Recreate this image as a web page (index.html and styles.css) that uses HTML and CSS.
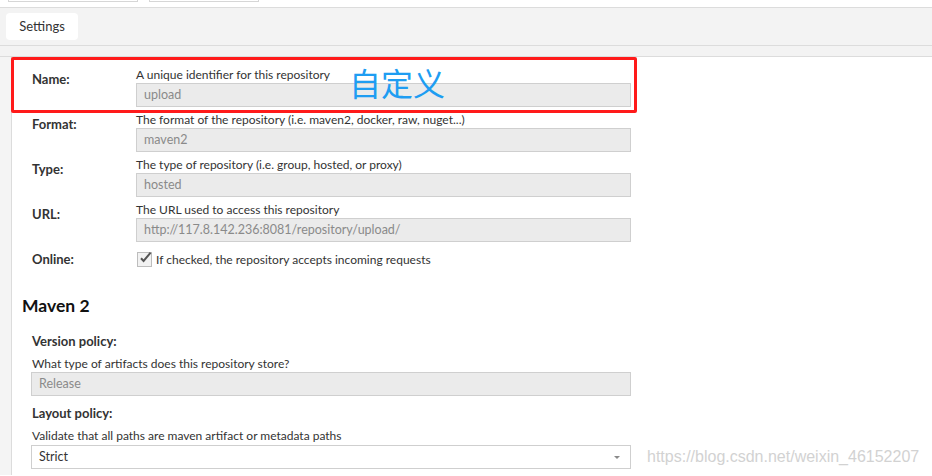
FILE: index.html
```html
<!DOCTYPE html>
<html>
<head>
<meta charset="utf-8">
<link rel="stylesheet" href="styles.css">
</head>
<body>
<div class="topstrip">
  <div class="stub stub-a"></div>
  <div class="stub stub-b"></div>
</div>
<div class="tabbar">
  <div class="tab">Settings</div>
</div>
<div class="subbar"></div>
<div class="main">
  <div class="gutter"></div>
  <div class="content">
    <div class="row">
      <div class="row-label">Name:</div>
      <div class="field">
        <div class="help">A unique identifier for this repository</div>
        <div class="input">upload</div>
      </div>
    </div>
    <div class="row">
      <div class="row-label">Format:</div>
      <div class="field">
        <div class="help">The format of the repository (i.e. maven2, docker, raw, nuget...)</div>
        <div class="input">maven2</div>
      </div>
    </div>
    <div class="row">
      <div class="row-label">Type:</div>
      <div class="field">
        <div class="help">The type of repository (i.e. group, hosted, or proxy)</div>
        <div class="input">hosted</div>
      </div>
    </div>
    <div class="row">
      <div class="row-label">URL:</div>
      <div class="field">
        <div class="help">The URL used to access this repository</div>
        <div class="input">http://117.8.142.236:8081/repository/upload/</div>
      </div>
    </div>
    <div class="row">
      <div class="row-label">Online:</div>
      <div class="field check-field">
        <span class="checkbox"><svg width="14" height="14" viewBox="0 0 14 14"><path d="M3 7.2 L5.6 10 L12.6 1.6" fill="none" stroke="#555" stroke-width="2"/></svg></span>
        <span class="check-text">If checked, the repository accepts incoming requests</span>
      </div>
    </div>

    <h2 class="section-title">Maven 2</h2>

    <div class="block">
      <div class="block-label">Version policy:</div>
      <div class="block-help">What type of artifacts does this repository store?</div>
      <div class="input wide">Release</div>
    </div>
    <div class="block">
      <div class="block-label">Layout policy:</div>
      <div class="block-help">Validate that all paths are maven artifact or metadata paths</div>
      <div class="select wide">Strict<span class="arrow"></span></div>
    </div>
  </div>
</div>

<div class="annot-box"></div>
<div class="annot-text">自定义</div>
<div class="watermark">https://blog.csdn.net/weixin_46152207</div>
</body>
</html>
```

FILE: styles.css
```css
html, body {
  margin: 0;
  padding: 0;
  background: #fff;
  font-family: "Lato", "Open Sans", sans-serif;
  color: #333;
  width: 932px;
  height: 476px;
  overflow: hidden;
  position: relative;
}

.topstrip {
  height: 7px;
  background: #fff;
  border-bottom: 1px solid #dcdcdc;
  display: flex;
  gap: 11px;
  padding-left: 8px;
}
.stub {
  height: 1px;
  border: 1px solid #d6d6d6;
  border-top: none;
  background: #fff;
}
.stub-a { width: 128px; }
.stub-b { width: 108px; }

.tabbar {
  height: 38px;
  background: #f3f3f3;
  border-bottom: 1px solid #dcdcdc;
  padding: 5px 6px 0;
  box-sizing: border-box;
}
.tab {
  width: 72px;
  height: 27px;
  background: #fff;
  border-radius: 4px;
  font-size: 13px;
  line-height: 27px;
  text-align: center;
  color: #333;
}
.subbar {
  height: 10px;
  background: #f3f3f3;
  border-bottom: 1px solid #dcdcdc;
}

.main {
  display: flex;
  height: 418px;
}
.gutter {
  width: 11px;
  background: #f4f4f4;
  border-right: 1px solid #dcdcdc;
}
.content {
  flex: 1;
  background: #fff;
  padding: 10px 0 0 10px;
}

.row {
  display: flex;
  margin-left: 10px;
  margin-bottom: 5px;
}
.row-label {
  width: 104px;
  padding-top: 4px;
  font-size: 13px;
  font-weight: 700;
  line-height: 16px;
  color: #333;
}
.field {
  width: 495px;
}
.help {
  font-size: 12px;
  line-height: 16px;
  color: #333;
}
.input {
  height: 24px;
  box-sizing: border-box;
  border: 1px solid #cfcfcf;
  background: #ebebeb;
  color: #8a8a8a;
  font-size: 12.5px;
  line-height: 22px;
  padding: 0 7px;
}
.check-field {
  display: flex;
  align-items: center;
  padding-top: 5px;
  height: 14px;
}
.checkbox {
  width: 13px;
  height: 13px;
  border: 1px solid #bdbdbd;
  background: #f2f2f2;
  margin-left: 1px;
  position: relative;
  flex: none;
}
.checkbox svg {
  position: absolute;
  left: 0;
  top: -2px;
}
.check-text {
  font-size: 12px;
  color: #333;
  margin-left: 4px;
}

.section-title {
  margin: 29px 0 0;
  font-size: 17.5px;
  line-height: 20px;
  font-weight: 700;
  color: #111;
}

.block {
  margin-left: 9px;
  width: 600px;
}
.block-label {
  font-size: 13px;
  font-weight: 700;
  line-height: 16px;
  margin-top: 17px;
  margin-left: 1px;
  color: #333;
}
.block + .block .block-label {
  margin-top: 9px;
}
.block-help {
  font-size: 12px;
  line-height: 14px;
  margin-top: 8px;
  margin-bottom: 1px;
  margin-left: 1px;
  color: #333;
}
.block + .block .block-help {
  margin-top: 8px;
  margin-bottom: 2px;
}
.wide {
  width: 600px;
}
.select {
  height: 24px;
  box-sizing: border-box;
  border: 1px solid #cfcfcf;
  background: #fff;
  color: #333;
  font-size: 12.5px;
  line-height: 22px;
  padding: 0 7px;
  display: flex;
  justify-content: space-between;
  align-items: center;
}
.arrow {
  width: 0;
  height: 0;
  border-left: 3.5px solid transparent;
  border-right: 3.5px solid transparent;
  border-top: 3.5px solid #8a8a8a;
  margin-right: 3px;
}

.annot-box {
  position: absolute;
  left: 11px;
  top: 57px;
  width: 626px;
  height: 56px;
  box-sizing: border-box;
  border: 3px solid #ff1a1a;
  border-radius: 2px;
}
.annot-text {
  position: absolute;
  left: 349px;
  top: 64px;
  font-family: "Noto Sans CJK SC", sans-serif;
  font-size: 32px;
  line-height: 36px;
  color: #1e9df2;
}
.watermark {
  position: absolute;
  left: 647px;
  top: 447px;
  font-family: "Liberation Sans", Arial, sans-serif;
  font-size: 16px;
  line-height: 20px;
  color: #d2d2d2;
}
```
